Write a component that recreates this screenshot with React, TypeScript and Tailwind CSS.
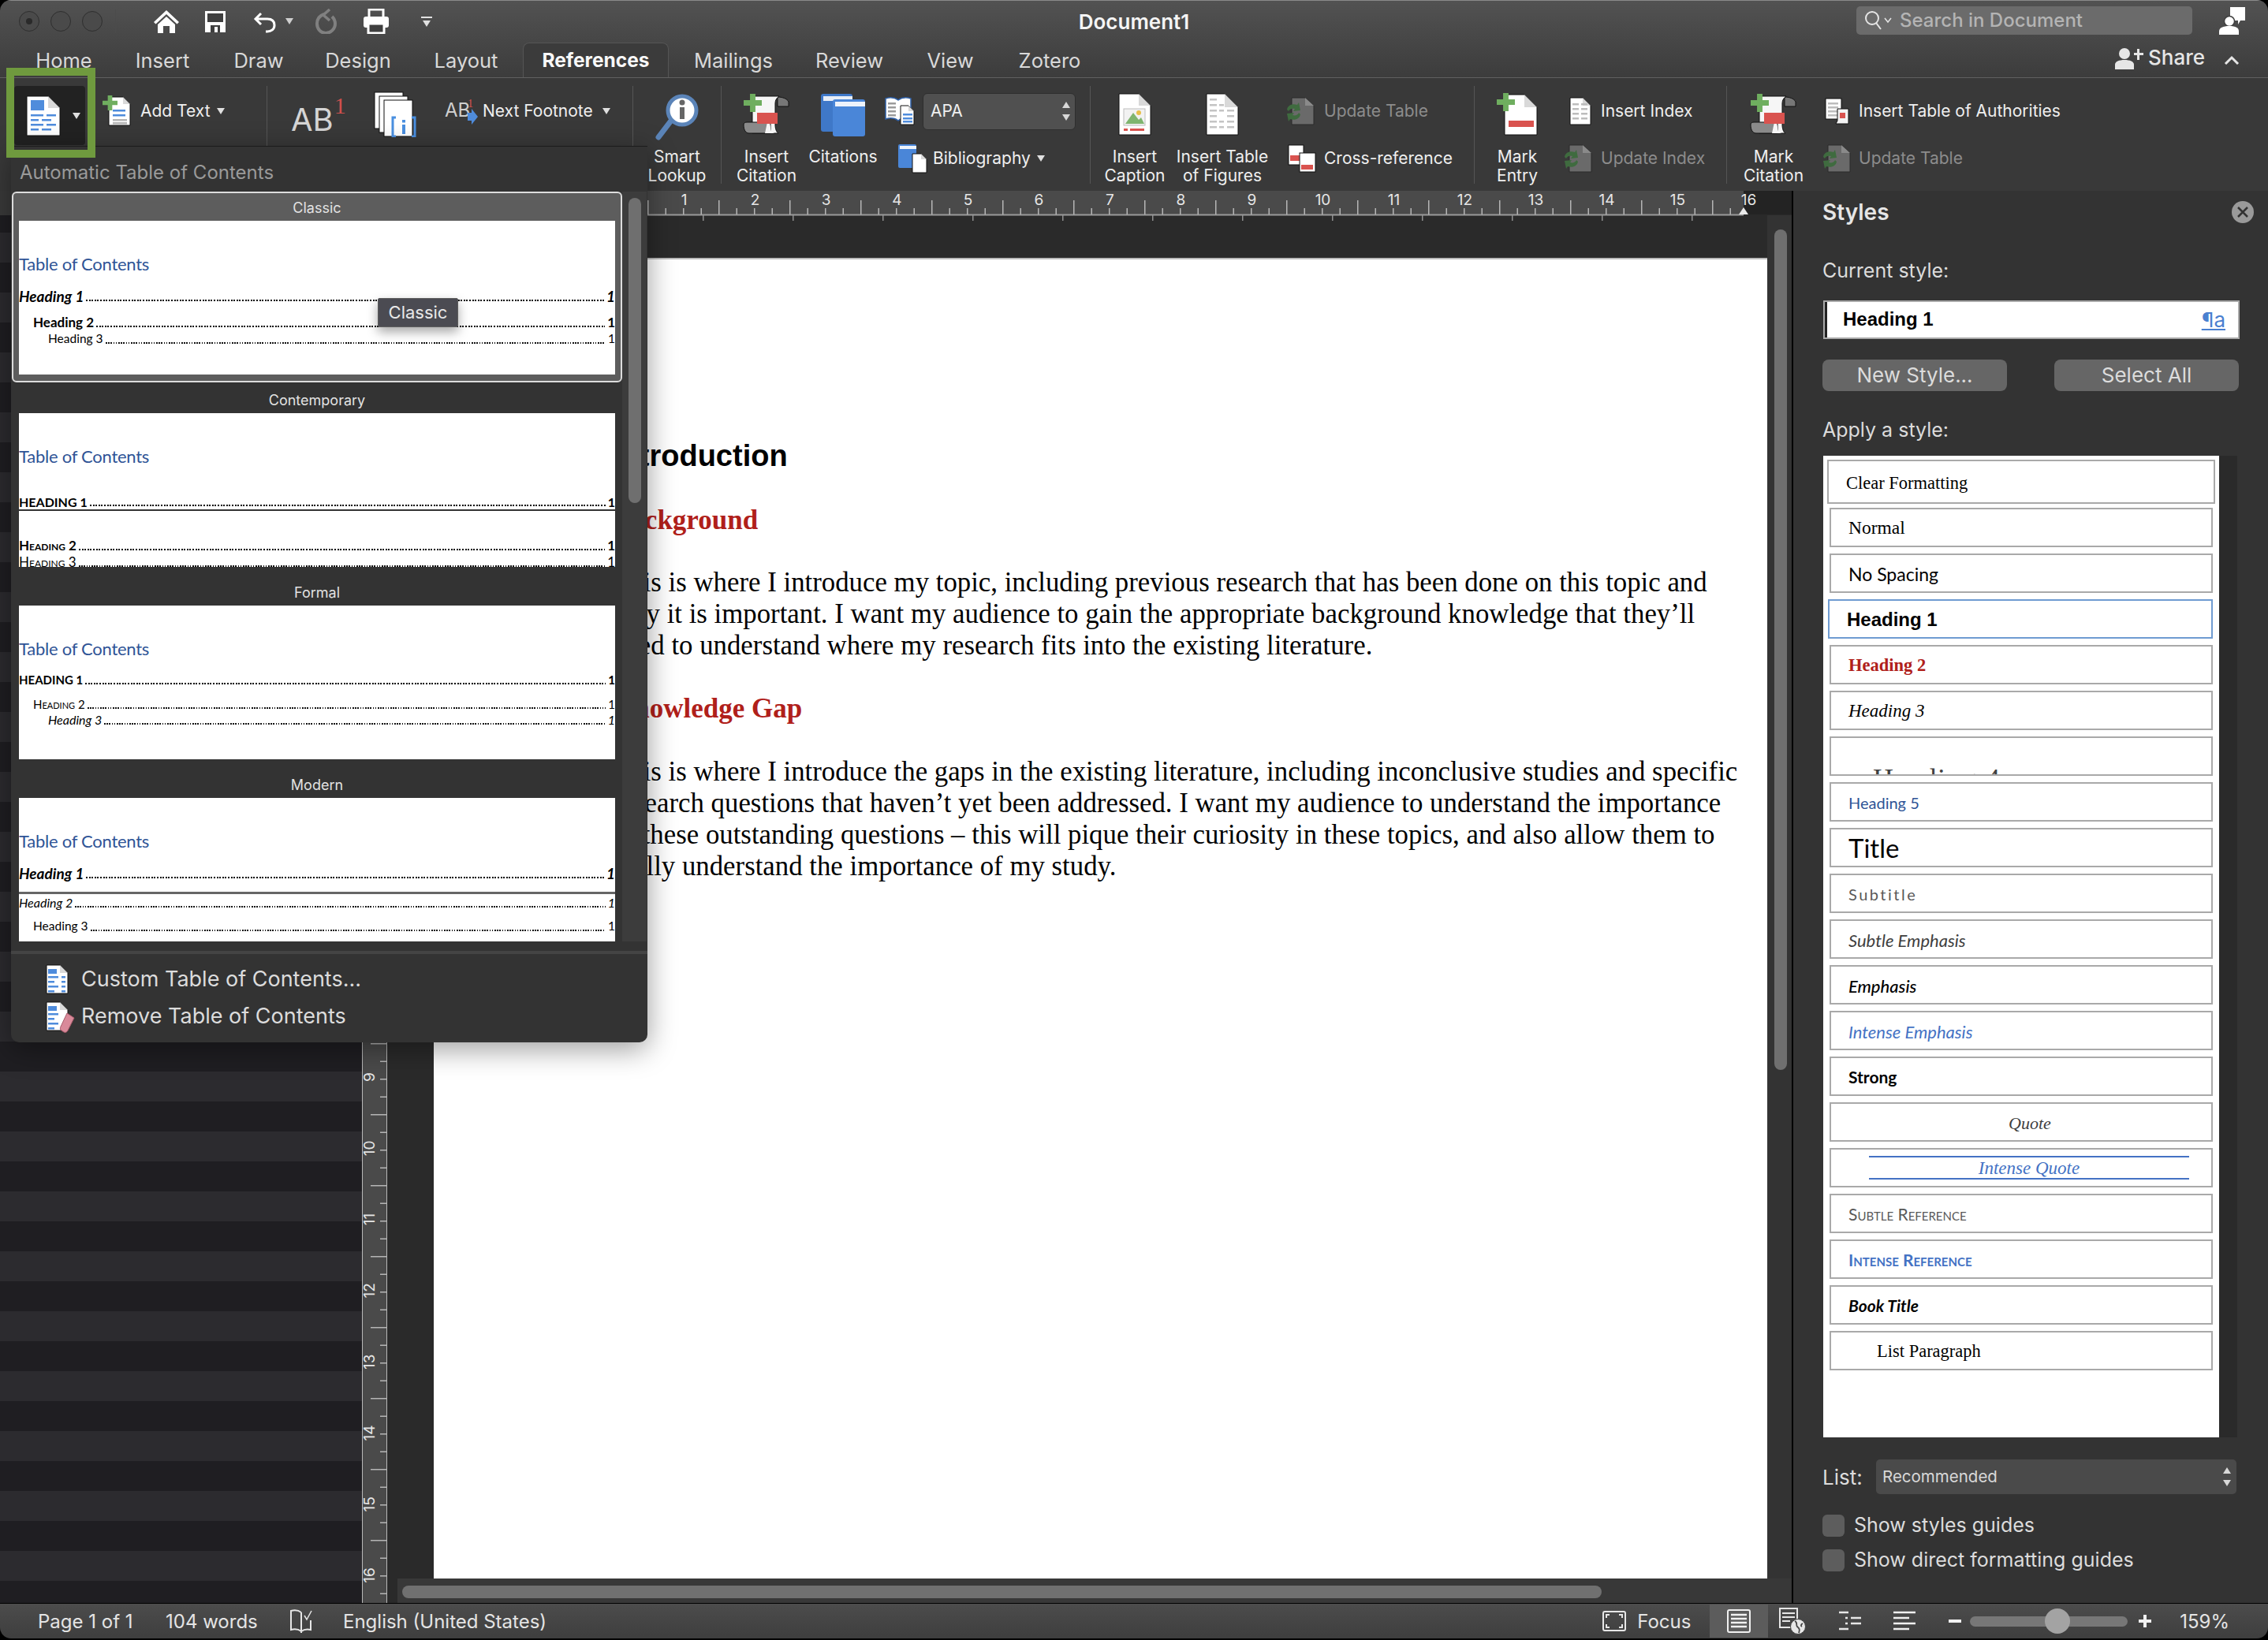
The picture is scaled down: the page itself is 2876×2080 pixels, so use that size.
import React from "react";

const FOLD = "#d9d9d9";
function Pg({ x, y, w, h, f = 12, fill = "#fff" }: { x: number; y: number; w: number; h: number; f?: number; fill?: string }) {
  return (
    <g>
      <path d={`M${x} ${y}H${x + w - f}L${x + w} ${y + f}V${y + h}H${x}Z`} fill={fill} stroke="#111" strokeWidth="1" />
      <path d={`M${x + w - f} ${y}V${y + f}H${x + w}Z`} fill={FOLD} />
    </g>
  );
}
function Plus({ x, y, s = 22, c = "#6fae5f" }: { x: number; y: number; s?: number; c?: string }) {
  const t = s * 0.3;
  return <path d={`M${x + (s - t) / 2} ${y}h${t}v${(s - t) / 2}h${(s - t) / 2}v${t}h-${(s - t) / 2}v${(s - t) / 2}h-${t}v-${(s - t) / 2}h-${(s - t) / 2}v-${t}h${(s - t) / 2}z`} fill={c} />;
}
function TocIcon() {
  return (
    <svg width="44" height="52" viewBox="0 0 44 52">
      <Pg x={1} y={1} w={42} h={50} f={15} />
      <rect x="6" y="6" width="17" height="13" fill="#4f8cdc" />
      {[24, 30, 36, 42].map((y, i) => (
        <g key={y}>
          <rect x="6" y={y} width={i % 2 ? 10 : 16} height="2.5" fill="#4f8cdc" />
          <rect x={i % 2 ? 20 : 26} y={y} width="12" height="2.5" fill="#4f8cdc" />
        </g>
      ))}
    </svg>
  );
}
function AddTextIcon() {
  return (
    <svg width="36" height="40" viewBox="0 0 36 40">
      <Pg x={8} y={2} w={27} h={36} f={9} />
      {[18, 24].map((y) => <rect key={y} x="13" y={y} width="16" height="2.5" fill="#4f8cdc" />)}
      {[30, 34].map((y) => <rect key={y} x="13" y={y} width="18" height="2.5" fill="#b5b5b5" />)}
      <Plus x={0} y={0} s={19} />
    </svg>
  );
}
function PagesIcon() {
  return (
    <svg width="56" height="58" viewBox="0 0 56 58">
      <rect x="1" y="1" width="36" height="46" fill="#fff" stroke="#111" />
      <rect x="7" y="6" width="36" height="46" fill="#fff" stroke="#111" />
      <rect x="13" y="11" width="36" height="46" fill="#fff" stroke="#111" />
      <path d="M28 33h-4v24h4M48 33h4v24h-4" fill="none" stroke="#4a8fe0" strokeWidth="3" />
      <rect x="36" y="36" width="4" height="3.5" fill="#4a8fe0" />
      <rect x="36" y="42" width="4" height="12" fill="#4a8fe0" />
    </svg>
  );
}
function NextFootIcon() {
  return (
    <svg width="42" height="40" viewBox="0 0 42 40">
      <text x="0" y="27" fontSize="24" fill="#cfcfcf" fontFamily="Inter">AB</text>
      <text x="29" y="15" fontSize="14" fill="#d9534f" fontFamily="Liberation Serif">1</text>
      <path d="M29 22h5v-5l8 10-8 10v-5h-5z" fill="#4f8cdc" />
    </svg>
  );
}
function LensIcon() {
  return (
    <svg width="60" height="60" viewBox="0 0 60 60">
      <path d="M22 35L6 56" stroke="#5b84b8" strokeWidth="7" strokeLinecap="round" />
      <circle cx="36" cy="22" r="18" fill="#fff" stroke="#5b84b8" strokeWidth="5" />
      <circle cx="36" cy="12" r="3.5" fill="#666" />
      <rect x="33" y="18" width="6" height="15" fill="#666" />
    </svg>
  );
}
function ScrollIcon() {
  return (
    <svg width="60" height="54" viewBox="0 0 60 54">
      <path d="M44 5c6 0 12 2 14 6v6H44z" fill="#777" stroke="#111" />
      <path d="M12 4H46c-3 2-5 5-5 9v27c0 6 2 10 4 11H12z" fill="#f6f6f6" stroke="#111" />
      <path d="M1 40c0-2 2-3 4-3h30v14H8c-5 0-7-5-7-11z" fill="#8a8a8a" stroke="#111" />
      <path d="M31 37c2 0 4 2 4 7s3 7 7 7H28z" fill="#f6f6f6" />
      <rect x="18" y="25" width="26" height="14" fill="#d9534f" />
      <Plus x={1} y={1} s={23} />
    </svg>
  );
}
function BooksIcon() {
  return (
    <svg width="58" height="56" viewBox="0 0 58 56">
      <rect x="1" y="1" width="40" height="48" rx="3" fill="#3f78c8" />
      <rect x="4" y="4" width="37" height="6" fill="#e8eef7" />
      <rect x="16" y="8" width="41" height="47" rx="3" fill="#4a86d8" />
      <rect x="19" y="11" width="38" height="6" fill="#eef3fb" />
    </svg>
  );
}
function BookDocIcon() {
  return (
    <svg width="38" height="36" viewBox="0 0 38 36">
      <path d="M1 2c6-2 12-1 16 2 4-3 10-4 16-2v26c-6-2-12-1-16 2-4-3-10-4-16-2z" fill="#fff" stroke="#2f5fa5" strokeWidth="1.5" />
      {[7, 12, 17, 22].map((y) => <rect key={y} x="4" y={y} width="10" height="2.5" fill="#9b9b9b" />)}
      <Pg x={20} y={11} w={17} h={24} f={7} />
      {[21, 26, 30].map((y) => <rect key={y} x="23" y={y} width="12" height="2.5" fill="#4f8cdc" />)}
    </svg>
  );
}
function BibIcon() {
  return (
    <svg width="38" height="38" viewBox="0 0 38 38">
      <rect x="1" y="1" width="23" height="30" rx="2" fill="#4a86d8" />
      <rect x="3" y="3" width="21" height="4" fill="#eef3fb" />
      <Pg x={19} y={13} w={18} h={24} f={7} />
    </svg>
  );
}
function CaptionIcon() {
  return (
    <svg width="42" height="54" viewBox="0 0 42 54">
      <Pg x={1} y={1} w={40} h={52} f={15} />
      <rect x="7" y="20" width="27" height="21" fill="#f2f2f2" stroke="#bdbdbd" />
      <path d="M9 39l10-14 7 9 3-3 4 8z" fill="#7fb56f" />
      <circle cx="26" cy="25" r="3" fill="#e7bf4a" />
      <rect x="7" y="45" width="5" height="3" fill="#d9534f" />
      <rect x="15" y="45" width="18" height="3" fill="#d9534f" />
    </svg>
  );
}
function FigIcon() {
  return (
    <svg width="42" height="54" viewBox="0 0 42 54">
      <Pg x={1} y={1} w={40} h={52} f={17} />
      {[7, 14, 21, 28, 35, 42].map((y, i) => (
        <g key={y}>
          <rect x="5" y={y} width="9" height="2.5" fill="#c4c4c4" />
          {i % 3 !== 0 && <rect x="17" y={y} width="6" height="2.5" fill="#c4c4c4" />}
          {i > 1 && <rect x="27" y={y} width="9" height="2.5" fill="#c4c4c4" />}
        </g>
      ))}
    </svg>
  );
}
function UpdateIcon() {
  return (
    <svg width="38" height="36" viewBox="0 0 38 36">
      <path d="M9 1H26L37 11V35H9Z" fill="#6a6a6a" stroke="#2a2a2a" />
      <path d="M26 1V11H37Z" fill="#8a8a8a" />
      <path d="M3 16c1-6 7-8 13-6l2-3 2 10-9 1 2-3c-3-1-7 0-8 3z" fill="#3f6b3f" />
      <path d="M20 22c-1 6-7 8-13 6l-2 3-2-10 9-1-2 3c3 1 7 0 8-3z" fill="#3f6b3f" />
    </svg>
  );
}
function CrossIcon() {
  return (
    <svg width="36" height="36" viewBox="0 0 36 36">
      <rect x="1" y="1" width="19" height="25" fill="#fff" stroke="#111" />
      <rect x="3" y="14" width="15" height="7" fill="#d9534f" />
      <rect x="15" y="11" width="20" height="24" fill="#fff" stroke="#111" />
      <rect x="17" y="26" width="15" height="6" fill="#d9534f" />
    </svg>
  );
}
function EntryIcon() {
  return (
    <svg width="52" height="54" viewBox="0 0 52 54">
      <Pg x={10} y={2} w={41} h={51} f={16} />
      <rect x="15" y="35" width="32" height="8" fill="#d9534f" />
      <Plus x={0} y={0} s={23} />
    </svg>
  );
}
function IndexIcon() {
  return (
    <svg width="28" height="36" viewBox="0 0 28 36">
      <Pg x={1} y={1} w={26} h={34} f={10} />
      {[8, 14, 20, 26].map((y) => (
        <g key={y}>
          <rect x="4" y={y} width="8" height="2.5" fill="#bdbdbd" />
          <rect x="15" y={y} width="8" height="2.5" fill="#bdbdbd" />
        </g>
      ))}
    </svg>
  );
}
function AuthIcon() {
  return (
    <svg width="32" height="34" viewBox="0 0 32 34">
      <rect x="1" y="1" width="20" height="26" fill="#fff" stroke="#111" />
      {[6, 11, 16, 21].map((y) => <rect key={y} x="4" y={y} width="13" height="2.5" fill="#bdbdbd" />)}
      <path d="M16 14h14v19H14l2-4z" fill="#f3f3f3" stroke="#111" />
      <rect x="19" y="19" width="7" height="7" fill="#d9534f" />
    </svg>
  );
}
function MenuDocIcon({ eraser }: { eraser?: boolean }) {
  return (
    <svg width="38" height="40" viewBox="0 0 38 40">
      <Pg x={1} y={1} w={27} h={36} f={10} />
      <rect x="3" y="6" width="11" height="6" fill="#4f8cdc" />
      {[15, 21, 27, 33].map((y, i) => <rect key={y} x="3" y={y} width={i % 2 ? 8 : 13} height="2.5" fill="#4f8cdc" />)}
      {!eraser && [15, 21, 27, 33].map((y) => <rect key={y + 1} x="20" y={y} width="5" height="2.5" fill="#4f8cdc" />)}
      {eraser && <path d="M27 15l9 6-8 16c-1 2-3 3-5 2l-3-2c-2-1-2-3-1-5z" fill="#d98a9a" stroke="#a85a6a" />}
    </svg>
  );
}
function HomeIcon() {
  return (
    <svg width="34" height="30" viewBox="0 0 34 30">
      <path d="M17 1L33 16l-2.5 2.5L17 6 3.5 18.5 1 16z" fill="#fff" />
      <path d="M17 9l11 10v11h-7v-9h-8v9H6V19z" fill="#fff" />
    </svg>
  );
}
function SaveIcon() {
  return (
    <svg width="28" height="29" viewBox="0 0 28 29">
      <path d="M1 1h26v27H1z" fill="#fff" />
      <rect x="4" y="4" width="20" height="11" fill="#3f3f3f" />
      <rect x="8" y="19" width="12" height="9" fill="#3f3f3f" />
      <rect x="13" y="21" width="4" height="7" fill="#fff" />
    </svg>
  );
}
function UndoIcon() {
  return (
    <svg width="32" height="30" viewBox="0 0 32 30">
      <path d="M10 5L3 12l7 7M3 12h15c6 0 9 3 9 8s-4 8-9 8h-2" fill="none" stroke="#fff" strokeWidth="3" />
    </svg>
  );
}
function RedoGray() {
  return (
    <svg width="30" height="32" viewBox="0 0 30 32">
      <path d="M19 1l-8 7 8 7" fill="none" stroke="#808080" strokeWidth="3.5" />
      <path d="M12 7C6 9 3 13 3 19c0 7 5 12 11 12s12-5 12-12c0-4-2-7-4-9" fill="none" stroke="#808080" strokeWidth="4" />
    </svg>
  );
}
function PrintIcon() {
  return (
    <svg width="34" height="32" viewBox="0 0 34 32">
      <path d="M8 10V1h18v9" fill="none" stroke="#fff" strokeWidth="3" />
      <rect x="1" y="10" width="32" height="14" rx="3" fill="#fff" />
      <rect x="7" y="19" width="20" height="12" fill="#3f3f3f" stroke="#fff" strokeWidth="3" />
    </svg>
  );
}
const Tri = ({ c = "#e0e0e0" }: { c?: string }) => (
  <svg width="10" height="8" viewBox="0 0 10 8"><path d="M0 0h10L5 8z" fill={c} /></svg>
);
function UpDown({ c = "#d8d8d8" }: { c?: string }) {
  return (
    <svg width="12" height="28" viewBox="0 0 12 28">
      <path d="M6 2l5 8H1z" fill={c} />
      <path d="M6 26l5-8H1z" fill={c} />
    </svg>
  );
}
function PersonBubble() {
  return (
    <svg width="36" height="36" viewBox="0 0 36 36">
      <path d="M15 1h19v17h-6l-3 5v-5h-10z" fill="#fff" />
      <circle cx="14" cy="19" r="6.5" fill="#fff" stroke="#3f3f3f" strokeWidth="1.5" />
      <path d="M1 36v-4c0-5 5-7 13-7s12 2 12 7v4z" fill="#fff" />
    </svg>
  );
}
function ShareIcon() {
  return (
    <svg width="36" height="28" viewBox="0 0 36 28">
      <circle cx="12" cy="8" r="7" fill="#e6e6e6" />
      <path d="M0 28v-6c0-4 5-6 12-6s12 2 12 6v6z" fill="#e6e6e6" />
      <path d="M24 7h4V2h3v5h5v3h-5v6h-3v-6h-4z" fill="#e6e6e6" />
    </svg>
  );
}

function Big({ w, icon, l1, l2, h = "h-[78px]" }: { w: string; icon: React.ReactNode; l1: string; l2?: string; h?: string }) {
  return (
    <div className={`${w} shrink-0 flex flex-col items-center`}>
      <div className={`${h} flex items-start justify-center pt-[9px]`}>{icon}</div>
      <div className="text-[21px] leading-[24px] text-[#efefef] text-center whitespace-nowrap">{l1}</div>
      {l2 && <div className="text-[21px] leading-[24px] text-[#efefef] text-center whitespace-nowrap">{l2}</div>}
    </div>
  );
}
function SmallRow({ h, pl, gap, icon, label, gray, arrow }: { h: string; pl: string; gap: string; icon: React.ReactNode; label: string; gray?: boolean; arrow?: boolean }) {
  return (
    <div className={`${h} ${pl} flex items-center`}>
      <span className={`${gap} shrink-0 flex`}>{icon}</span>
      <span className={`text-[21px] whitespace-nowrap ${gray ? "text-[#8c8c8c]" : "text-[#efefef]"}`}>{label}</span>
      {arrow && <span className="ml-[8px] flex"><Tri /></span>}
    </div>
  );
}
const Sep = () => <div className="w-[1px] h-[124px] bg-[#555] shrink-0 mt-[10px]" />;

function Ribbon() {
  return (
    <div className="h-[143px] bg-[#393939] flex items-start shrink-0">
      <div className="w-[338px] shrink-0 flex pt-[10px]">
        <div className="ml-[18px] w-[90px] h-[75px] bg-[#222] rounded-[4px] flex items-center pl-[15px] pr-[6px] justify-between">
          <TocIcon />
          <Tri />
        </div>
        <div className="ml-[22px] flex items-center h-[64px]">
          <span className="mr-[12px] flex"><AddTextIcon /></span>
          <span className="text-[21px] text-[#efefef] whitespace-nowrap">Add Text</span>
          <span className="ml-[8px] flex"><Tri /></span>
        </div>
      </div>
      <Sep />
      <div className="w-[463px] shrink-0 flex items-start pt-[19px] pl-[30px]">
        <div className="w-[105px] flex items-start h-[50px] text-[#d5d5d5]">
          <span className="text-[40px] leading-[50px] mt-[9px]">AB</span>
          <span className="text-[30px] leading-[30px] text-[#d0504d] font-['Liberation_Serif',serif] ml-[1px] mt-[1px]">1</span>
        </div>
        <span className="-mt-[2px] w-[90px] flex"><PagesIcon /></span>
        <div className="flex items-center h-[40px] mt-[3px]">
          <span className="w-[48px] flex"><NextFootIcon /></span>
          <span className="text-[21px] text-[#efefef] whitespace-nowrap">Next Footnote</span>
          <span className="ml-[12px] flex"><Tri /></span>
        </div>
      </div>
      <Sep />
      <div className="w-[111px] shrink-0 pt-[10px]">
        <Big w="w-[111px]" icon={<LensIcon />} l1="Smart" l2="Lookup" />
      </div>
      <Sep />
      <div className="w-[467px] shrink-0 flex pt-[10px]">
        <Big w="w-[114px]" icon={<ScrollIcon />} l1="Insert" l2="Citation" />
        <Big w="w-[80px]" icon={<BooksIcon />} l1="Citations" />
        <div className="flex flex-col">
          <div className="h-[64px] flex items-center pl-[13px]">
            <span className="w-[48px] flex"><BookDocIcon /></span>
            <div className="w-[194px] h-[47px] bg-[#505050] rounded-[6px] border border-[#2e2e2e] flex items-center justify-between pl-[9px] pr-[5px] text-[21px] text-[#efefef]">
              APA
              <UpDown />
            </div>
          </div>
          <SmallRow h="h-[56px]" pl="pl-[29px]" gap="w-[45px]" icon={<BibIcon />} label="Bibliography" arrow />
        </div>
      </div>
      <Sep />
      <div className="w-[486px] shrink-0 flex pt-[10px]">
        <Big w="w-[112px]" icon={<CaptionIcon />} l1="Insert" l2="Caption" />
        <Big w="w-[110px]" icon={<FigIcon />} l1="Insert Table" l2="of Figures" />
        <div className="flex flex-col">
          <SmallRow h="h-[64px]" pl="pl-[24px]" gap="w-[50px]" icon={<UpdateIcon />} label="Update Table" gray />
          <SmallRow h="h-[56px]" pl="pl-[28px]" gap="w-[46px]" icon={<CrossIcon />} label="Cross-reference" />
        </div>
      </div>
      <Sep />
      <div className="w-[319px] shrink-0 flex pt-[10px]">
        <Big w="w-[108px]" icon={<EntryIcon />} l1="Mark" l2="Entry" />
        <div className="flex flex-col">
          <SmallRow h="h-[64px]" pl="pl-[12px]" gap="w-[40px]" icon={<IndexIcon />} label="Insert Index" />
          <SmallRow h="h-[56px]" pl="pl-[3px]" gap="w-[49px]" icon={<UpdateIcon />} label="Update Index" gray />
        </div>
      </div>
      <Sep />
      <div className="flex-1 flex pt-[10px]">
        <Big w="w-[118px]" icon={<ScrollIcon />} l1="Mark" l2="Citation" />
        <div className="flex flex-col">
          <SmallRow h="h-[64px]" pl="pl-[6px]" gap="w-[43px]" icon={<AuthIcon />} label="Insert Table of Authorities" />
          <SmallRow h="h-[56px]" pl="pl-[1px]" gap="w-[48px]" icon={<UpdateIcon />} label="Update Table" gray />
        </div>
      </div>
    </div>
  );
}

const tabs = [
  ["Home", "w-[128px]"], ["Insert", "w-[122px]"], ["Draw", "w-[122px]"], ["Design", "w-[130px]"], ["Layout", "w-[144px]"],
  ["References", "w-[185px]"], ["Mailings", "w-[164px]"], ["Review", "w-[130px]"], ["View", "w-[126px]"], ["Zotero", "w-[126px]"],
];

function Chrome() {
  return (
    <div className="h-[99px] shrink-0 bg-gradient-to-b from-[#525252] to-[#3c3c3c] border-t border-[#8a8a8a]">
      <div className="h-[54px] grid grid-cols-[1fr_auto_1fr] items-start">
        <div className="flex items-center h-[52px] pl-[24px]">
          {[0, 1, 2].map((i) => (
            <span key={i} className="w-[26px] h-[26px] rounded-full bg-[#4a4a4a] border border-[#2f2f2f] mr-[14px] flex items-center justify-center">
              {i === 0 && <span className="w-[8px] h-[8px] rounded-full bg-[#2a2a2a]" />}
            </span>
          ))}
          <span className="w-[1px] h-[30px] bg-[#4b4b4b] ml-[2px] mr-[47px]" />
          <span className="flex mr-[31px]"><HomeIcon /></span>
          <span className="flex mr-[34px]"><SaveIcon /></span>
          <span className="flex mr-[9px]"><UndoIcon /></span>
          <span className="flex mr-[27px]"><Tri c="#cfcfcf" /></span>
          <span className="flex mr-[31px]"><RedoGray /></span>
          <span className="flex mr-[40px]"><PrintIcon /></span>
          <span className="flex flex-col items-center gap-[3px]">
            <span className="w-[14px] h-[2px] bg-[#e0e0e0]" />
            <Tri c="#e0e0e0" />
          </span>
        </div>
        <div className="h-[52px] flex items-center text-[26px] font-semibold text-[#f5f5f5]">Document1</div>
        <div className="flex justify-end pt-[7px] pr-[27px]">
          <div className="w-[426px] h-[36px] bg-[#6b6b6b] rounded-[5px] flex items-center pl-[10px] text-[#b4b4b4] text-[24px] font-medium whitespace-nowrap">
            <svg width="22" height="28" viewBox="0 0 22 28" className="mr-[3px]"><circle cx="10" cy="11" r="8" fill="none" stroke="#e6e6e6" strokeWidth="2" /><path d="M15 17l6 8" stroke="#e6e6e6" strokeWidth="2" /></svg>
            <svg width="10" height="8" viewBox="0 0 10 8" className="mr-[10px]"><path d="M1 1l4 5 4-5" fill="none" stroke="#e6e6e6" strokeWidth="1.5" /></svg>
            Search in Document
          </div>
          <span className="ml-[33px] flex"><PersonBubble /></span>
        </div>
      </div>
      <div className="h-[44px] flex border-b border-[#606060] pl-[17px]">
        {tabs.map(([t, w]) => (
          <div key={t} className={`${w} h-[44px] flex items-center justify-center whitespace-nowrap ${t === "References" ? "bg-[#3b3b3b] rounded-t-[8px] border border-b-0 border-[#555] font-bold text-[#f8f8f8] text-[24.5px] -mt-px" : "text-[#d9d9d9] text-[25.5px]"}`}>
            {t}
          </div>
        ))}
        <div className="ml-auto flex items-start pr-[36px] pt-[1px] text-[#e6e6e6]">
          <span className="flex mr-[6px] mt-[4px]"><ShareIcon /></span>
          <span className="text-[26px] leading-[34px] font-medium">Share</span>
          <svg width="20" height="12" viewBox="0 0 20 12" className="ml-[24px] mt-[14px]"><path d="M2 11l8-8 8 8" fill="none" stroke="#e6e6e6" strokeWidth="3" /></svg>
        </div>
      </div>
    </div>
  );
}

function HRuler() {
  const xs = Array.from({ length: 64 }, (_, i) => 821 + 22.5 * i).filter((x) => x <= 2211);
  const tabsX = Array.from({ length: 12 }, (_, i) => 891 + 114 * i);
  return (
    <div className="h-[31px] shrink-0 flex bg-[#2a2a2a]">
      <div className="w-[459px] bg-[#3a3a3a] shrink-0" />
      <div className="w-[91px] shrink-0" />
      <svg width="1722" height="40" viewBox="550 0 1722 40" className="shrink-0 overflow-visible">
        <rect x="550" y="0" width="1661" height="30" fill="#4a4a4a" />
        <rect x="2211" y="0" width="61" height="30" fill="#232323" />
        <rect x="550" y="29.5" width="1661" height="2" fill="#9a9a9a" />
        {xs.map((x, i) => (
          <rect key={x} x={x} y={i % 4 === 0 ? 12 : 22} width="1.5" height={i % 4 === 0 ? 18 : 8} fill="#b5b5b5" />
        ))}
        {tabsX.map((x) => <rect key={x} x={x} y="31" width="1.5" height="7" fill="#8f8f8f" />)}
        {Array.from({ length: 16 }, (_, i) => i + 1).map((n) => (
          <text key={n} x={777.5 + 90 * n} y="18" fontSize="19" fill="#e6e6e6" textAnchor="middle" fontFamily="Inter">{n}</text>
        ))}
        <path d="M2205 30l6-9 6 9z" fill="#eaeaea" />
      </svg>
    </div>
  );
}
function VRuler() {
  const ys = Array.from({ length: 80 }, (_, i) => 1323 - 273 + 22.5 * i).filter((y) => y < 1761);
  return (
    <div className="w-[32px] shrink-0 bg-[#4a4a4a] border-x border-[#b8b8b8]">
      <svg width="30" height="1761" viewBox="0 0 30 1761">
        {ys.map((y, i) => (
          <rect key={y} x={i % 4 === 0 ? 10 : 22} y={y} width={i % 4 === 0 ? 20 : 8} height="1.5" fill="#b5b5b5" />
        ))}
        {Array.from({ length: 8 }, (_, i) => i + 9).map((n) => {
          const y = 1366 - 273 + 90.3 * (n - 9);
          return (
            <text key={n} transform={`translate(15 ${y}) rotate(-90)`} fontSize="19" fill="#e6e6e6" textAnchor="middle" fontFamily="Inter">{n}</text>
          );
        })}
      </svg>
    </div>
  );
}

function Page() {
  const body = "font-['Liberation_Serif',serif] text-[34.8px] leading-[40px] text-black whitespace-nowrap";
  const h2 = "font-['Liberation_Serif',serif] font-bold text-[35px] leading-[44px] text-[#b0201a] whitespace-nowrap";
  return (
    <div className="flex-1 bg-white pt-[224px] pl-[227px] overflow-hidden">
      <div className="font-['Liberation_Sans',sans-serif] font-bold text-[38px] leading-[50px] text-black whitespace-nowrap">Introduction</div>
      <div className={`${h2} mt-[35px]`}>Background</div>
      <div className={`${body} mt-[37px]`}>This is where I introduce my topic, including previous research that has been done on this topic and</div>
      <div className={body}>why it is important. I want my audience to gain the appropriate background knowledge that they’ll</div>
      <div className={body}>need to understand where my research fits into the existing literature.</div>
      <div className={`${h2} mt-[38px]`}>Knowledge Gap</div>
      <div className={`${body} mt-[38px]`}>This is where I introduce the gaps in the existing literature, including inconclusive studies and specific</div>
      <div className={body}>research questions that haven’t yet been addressed. I want my audience to understand the importance</div>
      <div className={body}>of these outstanding questions – this will pique their curiosity in these topics, and also allow them to</div>
      <div className={body}>really understand the importance of my study.</div>
    </div>
  );
}

function TocRow({ label, cls, box, heavy }: { label: string; cls: string; box: string; heavy?: boolean }) {
  return (
    <div className={`h-[20px] flex items-center text-black font-['Lato',sans-serif] whitespace-nowrap ${box} ${cls}`}>
      <span className="shrink-0">{label}</span>
      <span
        className={`flex-1 min-w-0 self-end mb-[4px] mx-[3px] ${heavy ? "h-[2.5px] bg-[repeating-linear-gradient(to_right,#000_0px,#000_2px,transparent_2px,transparent_3.6px)]" : "h-[2px] bg-[repeating-linear-gradient(to_right,#111_0px,#111_1.6px,transparent_1.6px,transparent_3.2px)]"}`}
      />
      <span className="shrink-0">1</span>
    </div>
  );
}
const TocTitle = () => (
  <div className="pt-[40px] h-[70px] text-[22px] leading-[30px] text-[#2f5496] font-['Lato',sans-serif] tracking-[-0.25px]">Table of Contents</div>
);
function Preview({ children }: { children: React.ReactNode }) {
  return <div className="h-[195px] bg-white overflow-hidden shrink-0">{children}</div>;
}
function Thumb({ name, sel, children }: { name: string; sel?: boolean; children: React.ReactNode }) {
  return (
    <div className={`h-[242px] mb-[2px] rounded-[6px] border-2 px-[7px] ${sel ? "bg-[#5d5d5d] border-[#dcdcdc]" : "border-transparent"}`}>
      <div className="h-[35px] pt-[2px] flex items-center justify-center text-[18px] text-[#e2e2e2]">{name}</div>
      <Preview>{children}</Preview>
    </div>
  );
}

function TocMenu() {
  return (
    <div className="absolute left-[14px] top-[185px] w-[807px] h-[1137px] bg-[#333] rounded-b-[10px] border-t border-[#1c1c1c] shadow-[0_8px_36px_rgba(0,0,0,0.4)] flex flex-col">
      <div className="h-[57px] shrink-0 pl-[11px] pt-[18px] text-[24px] leading-[30px] text-[#9a9a9a]">Automatic Table of Contents</div>
      <div className="h-[951px] shrink-0 flex overflow-hidden">
        <div className="w-[775px] shrink-0 pl-[1px]">
          <Thumb name="Classic" sel>
            <TocTitle />
            <TocRow heavy box="mt-[16px]" cls="font-bold italic text-[19px]" label="Heading 1" />
            <TocRow heavy box="mt-[13px] pl-[18px]" cls="font-bold text-[17px]" label="Heading 2" />
            <TocRow box="mt-[1px] pl-[37px]" cls="text-[15.5px]" label="Heading 3" />
          </Thumb>
          <Thumb name="Contemporary">
            <TocTitle />
            <TocRow heavy box="mt-[34px] border-b-[2px] border-[#333]" cls="font-bold text-[16px]" label="HEADING 1" />
            <TocRow heavy box="mt-[34px]" cls="font-bold text-[17px] [font-variant:small-caps]" label="Heading 2" />
            <TocRow box="mt-[1px]" cls="text-[17px] [font-variant:small-caps]" label="Heading 3" />
          </Thumb>
          <Thumb name="Formal">
            <TocTitle />
            <TocRow heavy box="mt-[14px]" cls="font-bold text-[15px]" label="HEADING 1" />
            <TocRow box="mt-[11px] pl-[18px]" cls="text-[15px] [font-variant:small-caps]" label="Heading 2" />
            <TocRow box="pl-[37px]" cls="italic text-[16px]" label="Heading 3" />
          </Thumb>
          <Thumb name="Modern">
            <TocTitle />
            <TocRow heavy box="mt-[16px]" cls="font-bold italic text-[19px]" label="Heading 1" />
            <div className="mt-[13px] h-[3px] bg-[#666]" />
            <TocRow box="mt-[1px]" cls="italic text-[16px]" label="Heading 2" />
            <TocRow box="mt-[10px] pl-[18px]" cls="text-[15.5px]" label="Heading 3" />
          </Thumb>
        </div>
        <div className="w-[31px] shrink-0 bg-[#3c3c3c] pt-[8px] pl-[8px]">
          <div className="w-[16px] h-[387px] rounded-full bg-[#6f6f6f]" />
        </div>
      </div>
      <div className="h-[4px] mt-[12px] bg-[#444] shrink-0" />
      <div className="pl-[44px] pt-[9px] text-[27px] text-[#dcdcdc]">
        {[["Custom Table of Contents...", false], ["Remove Table of Contents", true]].map(([t, e]) => (
          <div key={t as string} className="h-[47px] flex items-center whitespace-nowrap">
            <span className="w-[45px] flex shrink-0"><MenuDocIcon eraser={e as boolean} /></span>
            {t as string}
          </div>
        ))}
      </div>
    </div>
  );
}

function Sty({ children, cls = "", box = "ml-[8px] w-[486px] border-[#a9a9a9]" }: { children: React.ReactNode; cls?: string; box?: string }) {
  return (
    <div className={`h-[50px] mb-[8px] border-2 flex items-center pl-[22px] pt-[2px] overflow-hidden whitespace-nowrap ${box} ${cls}`}>
      {children}
    </div>
  );
}

function StylesPane() {
  const serif = "font-['Liberation_Serif',serif]";
  const lato = "font-['Lato',sans-serif]";
  const sans = "font-['Liberation_Sans',sans-serif]";
  return (
    <div className="w-[604px] shrink-0 bg-[#333] border-l-2 border-black pl-[37px] pt-[13px] text-[#dcdcdc]">
      <div className="h-[28px] flex items-center justify-between pr-[18px]">
        <span className="text-[28px] font-semibold text-[#e6e6e6]">Styles</span>
        <span className="w-[28px] h-[28px] rounded-full bg-[#9a9a9a] flex items-center justify-center">
          <svg width="14" height="14" viewBox="0 0 14 14"><path d="M1 1l12 12M13 1L1 13" stroke="#333" strokeWidth="2.5" /></svg>
        </span>
      </div>
      <div className="mt-[45px] h-[30px] text-[25px] leading-[30px]">Current style:</div>
      <div className="mt-[23px] ml-[1px] w-[528px] h-[49px] bg-white border-2 border-[#a9a9a9] flex items-center justify-between pr-[16px]">
        <div className="h-full border-l-[3px] border-[#222] pl-[20px] pb-[2px] flex items-center text-black font-bold text-[24px] font-['Liberation_Sans',sans-serif]">Heading 1</div>
        <span className="text-[#4a80d0] text-[26px] underline leading-none">¶a</span>
      </div>
      <div className="mt-[26px] flex gap-[60px]">
        <div className="w-[234px] h-[40px] pb-[1px] rounded-[8px] bg-[#666] flex items-center justify-center text-[26px]">New Style...</div>
        <div className="w-[234px] h-[40px] pb-[1px] rounded-[8px] bg-[#666] flex items-center justify-center text-[26px]">Select All</div>
      </div>
      <div className="mt-[34px] h-[30px] text-[25px] leading-[30px]">Apply a style:</div>
      <div className="mt-[18px] ml-[1px] flex w-[525px] h-[1245px]">
        <div className="w-[502px] h-full bg-white pt-[5px] overflow-hidden text-black">
          <div className={`ml-[5px] w-[492px] h-[56px] mb-[5px] border-2 border-[#a9a9a9] flex items-center pl-[22px] pt-[3px] text-[22.5px] ${serif}`}>Clear Formatting</div>
          <Sty cls={`${serif} text-[23.5px]`}>Normal</Sty>
          <Sty cls={`${lato} text-[23px]`}>No Spacing</Sty>
          <Sty box="ml-[6px] w-[488px] border-[#6f9bd1]" cls={`${sans} font-bold text-[24px]`}>Heading 1</Sty>
          <Sty cls={`${serif} font-bold text-[22.5px] text-[#b0201a]`}>Heading 2</Sty>
          <Sty cls={`${serif} italic text-[23px]`}>Heading 3</Sty>
          <div className={`ml-[8px] w-[486px] h-[50px] mb-[8px] border-2 border-[#a9a9a9] overflow-hidden pl-[53px] pt-[32px] text-[36px] tracking-[1.5px] leading-[40px] text-[#404040] ${serif}`}>Heading 4</div>
          <Sty cls={`${lato} text-[20px] text-[#2f5496]`}>Heading 5</Sty>
          <Sty cls={`${lato} text-[33px]`}>Title</Sty>
          <Sty cls={`${lato} text-[20px] tracking-[2.5px] text-[#595959]`}>Subtitle</Sty>
          <Sty cls={`${lato} italic text-[22px] text-[#404040]`}>Subtle Emphasis</Sty>
          <Sty cls={`${lato} italic font-medium text-[22px]`}>Emphasis</Sty>
          <Sty cls={`${lato} italic text-[22px] text-[#4472c4]`}>Intense Emphasis</Sty>
          <Sty cls={`${lato} font-bold text-[21px]`}>Strong</Sty>
          <Sty cls={`${serif} italic text-[22px] text-[#404040] justify-center`}>Quote</Sty>
          <div className="ml-[8px] w-[486px] h-[50px] mb-[8px] border-2 border-[#a9a9a9] pl-[48px] pr-[28px] pt-[8px]">
            <div className={`h-[30px] pt-[2px] border-y-2 border-[#4472c4] flex items-center justify-center ${serif} italic text-[23px] text-[#4472c4]`}>Intense Quote</div>
          </div>
          <Sty cls={`${lato} text-[21px] text-[#595959] [font-variant:small-caps]`}>Subtle Reference</Sty>
          <Sty cls={`${lato} font-bold text-[21px] text-[#4472c4] [font-variant:small-caps]`}>Intense Reference</Sty>
          <Sty cls={`${lato} font-bold italic text-[21px]`}>Book Title</Sty>
          <Sty cls={`${serif} text-[22.5px] pl-[58px]`}>List Paragraph</Sty>
        </div>
        <div className="w-[23px] bg-[#2a2a2a]" />
      </div>
      <div className="mt-[28px] h-[44px] flex items-center">
        <span className="w-[68px] text-[26px]">List:</span>
        <div className="w-[457px] h-[44px] rounded-[5px] bg-[#4a4a4a] flex items-center justify-between pl-[8px] pr-[6px] text-[20.5px] text-[#d8d8d8]">
          Recommended
          <UpDown />
        </div>
      </div>
      <div className="mt-[26px] h-[28px] flex items-center text-[25px]">
        <span className="w-[28px] h-[28px] rounded-[6px] bg-[#5d5d5d] mr-[12px]" />
        Show styles guides
      </div>
      <div className="mt-[16px] h-[28px] flex items-center text-[25px]">
        <span className="w-[28px] h-[28px] rounded-[6px] bg-[#5d5d5d] mr-[12px]" />
        Show direct formatting guides
      </div>
    </div>
  );
}

function StatusBar() {
  return (
    <div className="h-[44px] shrink-0 bg-gradient-to-b from-[#4c4c4c] to-[#3e3e3e] flex items-center pl-[48px] pt-[2px] text-[24px] text-[#e4e4e4] whitespace-nowrap">
      <span className="w-[162px]">Page 1 of 1</span>
      <span className="w-[157px]">104 words</span>
      <svg width="30" height="36" viewBox="0 0 30 36" className="mr-[38px]"><path d="M15 6C11 3 6 3 2 4v24c4-1 9-1 13 2 4-3 8-3 12-2V16M15 6v26" fill="none" stroke="#e6e6e6" strokeWidth="2" /><path d="M19 10l3 5 6-11" fill="none" stroke="#e6e6e6" strokeWidth="1.5" /></svg>
      <span>English (United States)</span>
      <div className="ml-auto flex items-center h-full pr-[49px] -mt-[2px]">
        <svg width="30" height="26" viewBox="0 0 30 26" className="mr-[14px]"><rect x="1" y="1" width="28" height="24" rx="2" fill="none" stroke="#e6e6e6" strokeWidth="2" /><path d="M5 9V5h4M21 5h4v4M25 17v4h-4M9 21H5v-4" fill="none" stroke="#e6e6e6" strokeWidth="2" /></svg>
        <span className="w-[92px] pt-[2px]">Focus</span>
        <div className="w-[74px] h-full bg-[#5c5c5c] flex items-center justify-center mr-[14px]">
          <svg width="30" height="30" viewBox="0 0 30 30"><rect x="1" y="1" width="28" height="28" rx="2" fill="none" stroke="#f0f0f0" strokeWidth="2" /><path d="M5 7h20M5 12h20M5 17h20M5 22h20" stroke="#f0f0f0" strokeWidth="2.5" /></svg>
        </div>
        <svg width="34" height="34" viewBox="0 0 34 34" className="mr-[40px]"><rect x="1" y="1" width="22" height="24" fill="none" stroke="#e6e6e6" strokeWidth="2" /><path d="M4 7h16M4 12h16M4 17h10" stroke="#e6e6e6" strokeWidth="2" /><circle cx="24" cy="24" r="9.5" fill="#e6e6e6" stroke="#444" /><path d="M20 17c4 2 1 5 3 7s4 3 2 8M30 20c-2 1-3 3-1 4" fill="none" stroke="#444" strokeWidth="1.8" /></svg>
        <svg width="30" height="26" viewBox="0 0 30 26" className="mr-[40px]"><path d="M2 2h12M10 9h3M17 9h13M10 16h3M17 16h13M2 23h12" stroke="#e6e6e6" strokeWidth="2.5" /></svg>
        <svg width="30" height="26" viewBox="0 0 30 26" className="mr-[41px]"><path d="M1 2h28M1 9h20M1 16h28M1 23h20" stroke="#f0f0f0" strokeWidth="2.5" /></svg>
        <span className="w-[16px] h-[4px] bg-[#f0f0f0] mr-[11px]" />
        <div className="w-[200px] h-[13px] rounded-full bg-[#777] mr-[14px] flex items-center pl-[95px]">
          <span className="w-[32px] h-[32px] rounded-full bg-[#a3a3a3]" />
        </div>
        <svg width="16" height="16" viewBox="0 0 16 16" className="mr-[36px]"><path d="M0 8h16M8 0v16" stroke="#f0f0f0" strokeWidth="4" /></svg>
        <span className="pt-[2px]">159%</span>
      </div>
    </div>
  );
}

export default function App() {
  return (
    <div className="relative w-[2876px] h-[2080px] bg-black overflow-hidden font-['Inter',sans-serif]">
      <div className="w-[2876px] h-[2078px] rounded-[14px] overflow-hidden flex flex-col">
        <Chrome />
        <Ribbon />
        <div className="flex-1 min-h-0 flex">
          <div className="w-[2272px] shrink-0 flex flex-col bg-[#2a2a2a]">
            <HRuler />
            <div className="flex-1 min-h-0 flex">
              <div className="w-[459px] shrink-0 bg-[repeating-linear-gradient(to_top,#1f1e22_0px,#1f1e22_28px,#2c2b2f_28px,#2c2b2f_66px,#1f1e22_66px,#1f1e22_76px)]" />
              <VRuler />
              <div className="flex-1 min-w-0 flex flex-col">
                <div className="flex-1 min-h-0 flex pl-[59px]">
                  <div className="w-[1691px] shrink-0 flex flex-col pt-[54px]">
                    <div className="h-[2px] bg-[#bbb] shrink-0" />
                    <Page />
                  </div>
                  <div className="flex-1 bg-[#333] pt-[18px] pl-[9px]">
                    <div className="w-[16px] h-[1066px] rounded-full bg-[#6f6f6f]" />
                  </div>
                </div>
                <div className="h-[31px] shrink-0 ml-[13px] bg-[#383838] pt-[9px] pl-[6px]">
                  <div className="w-[1521px] h-[16px] rounded-full bg-[#707070]" />
                </div>
              </div>
            </div>
          </div>
          <StylesPane />
        </div>
        <div className="h-[1px] bg-black shrink-0" />
        <StatusBar />
      </div>
      <TocMenu />
      <div className="absolute left-[8px] top-[86px] w-[113px] h-[114px] border-[10px] border-[#6f9a3e]" />
      <div className="absolute left-[479px] top-[378px] w-[102px] h-[37px] bg-[#4b4b52] border border-[#5d5d5d] rounded-[2px] shadow-[0_6px_14px_rgba(0,0,0,0.35)] flex items-center justify-center text-[22px] text-[#e8e8e8]">Classic</div>
    </div>
  );
}
